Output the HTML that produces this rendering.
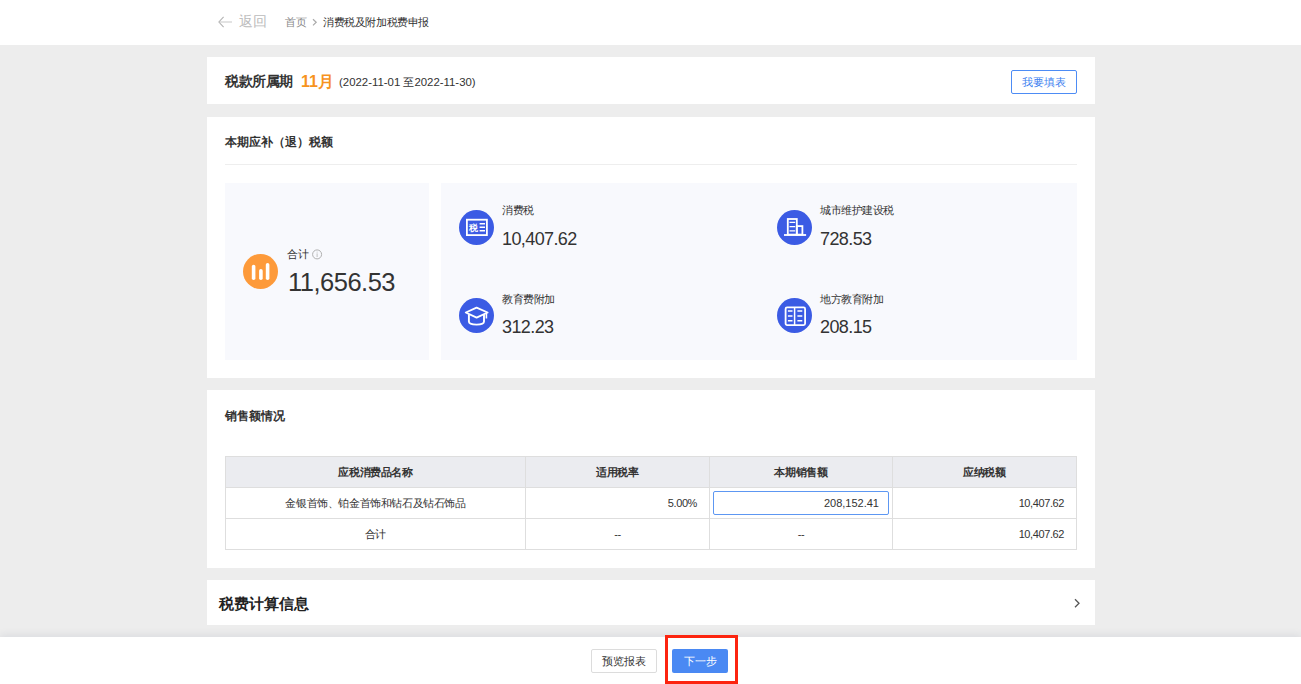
<!DOCTYPE html>
<html><head><meta charset="utf-8">
<style>
*{margin:0;padding:0;box-sizing:border-box;}
html,body{width:1301px;height:684px;overflow:hidden;}
body{background:#ededed;font-family:"Liberation Sans",sans-serif;color:#333;position:relative;}
.abs{position:absolute;white-space:nowrap;}
.card{position:absolute;left:207px;width:888px;background:#fff;}
.hdr{position:absolute;left:0;top:0;width:1301px;height:45px;background:#fff;}
.panel{position:absolute;background:#f8f9fd;}
.ic{position:absolute;width:35px;height:35px;border-radius:50%;background:#3b5be4;}
.lbl{font-size:11px;color:#333;letter-spacing:-0.5px;}
.num{font-size:18px;color:#333;letter-spacing:-0.6px;}
table{border-collapse:collapse;position:absolute;left:225px;top:456px;width:851px;table-layout:fixed;}
td,th{border:1px solid #dedede;height:31px;font-size:11px;letter-spacing:-0.4px;color:#333;}
th{background:#ebecf0;font-weight:bold;}
.bar{position:absolute;left:0;top:637px;width:1301px;height:47px;background:#fff;box-shadow:0 -2px 8px rgba(30,40,90,0.09);}
.btn{position:absolute;height:24px;font-size:11px;text-align:center;line-height:22px;border-radius:2px;}
</style></head><body>
<div class="hdr"></div>
<svg class="abs" style="left:214px;top:12px" width="22" height="20" viewBox="0 0 22 20"><path d="M5.5 10H18" stroke="#dcdcdc" stroke-width="1.6"/><path d="M9.6 4.8L4.9 10L9.6 15.2" fill="none" stroke="#b4b4b4" stroke-width="1.1"/></svg>
<div class="abs" style="left:239px;top:13px;font-size:14px;color:#bbb;">返回</div>
<div class="abs" style="left:285px;top:15px;font-size:11px;color:#888;">首页</div>
<svg class="abs" style="left:310px;top:15px" width="10" height="14" viewBox="0 0 10 14"><path d="M3 4.2L6.2 7.3L3 10.4" fill="none" stroke="#aaa" stroke-width="1.2"/></svg>
<div class="abs" style="left:323px;top:15px;font-size:11px;color:#333;letter-spacing:-0.4px;">消费税及附加税费申报</div>

<div class="card" style="top:57px;height:47px;"></div>
<div class="abs" style="left:225px;top:73px;font-size:14px;font-weight:bold;color:#333;letter-spacing:-0.5px;">税款所属期</div>
<div class="abs" style="left:301px;top:72px;font-size:16px;font-weight:bold;color:#f7931e;">11月</div>
<div class="abs" style="left:339px;top:75px;font-size:11.4px;color:#333;">(2022-11-01 至2022-11-30)</div>
<div class="abs" style="left:1011px;top:70px;width:66px;height:24px;border:1px solid #4d8cf5;border-radius:2px;font-size:11px;color:#3d7ff0;text-align:center;line-height:22px;">我要填表</div>

<div class="card" style="top:117px;height:261px;"></div>
<div class="abs" style="left:225px;top:134px;font-size:12px;font-weight:bold;color:#333;">本期应补（退）税额</div>
<div class="abs" style="left:225px;top:164px;width:852px;height:1px;background:#eeeeee;"></div>
<div class="panel" style="left:225px;top:183px;width:204px;height:177px;"></div>
<div class="panel" style="left:441px;top:183px;width:636px;height:177px;"></div>

<svg class="abs" style="left:243px;top:254px" width="35" height="35" viewBox="0 0 35 35"><circle cx="17.5" cy="17.5" r="17.5" fill="#fd9a3a"/><rect x="8.8" y="10.8" width="3.6" height="15.2" rx="1.8" fill="#fff"/><rect x="16.1" y="15" width="3.6" height="11" rx="1.8" fill="#fff"/><rect x="22.8" y="8.9" width="3.6" height="17.1" rx="1.8" fill="#fff"/></svg>
<div class="abs lbl" style="left:287px;top:247px;">合计</div>
<div class="abs num" style="left:288px;top:268px;font-size:25.5px;letter-spacing:-0.5px;">11,656.53</div>
<svg class="abs" style="left:311px;top:248px" width="13" height="13" viewBox="0 0 13 13"><circle cx="6.1" cy="6.4" r="4.5" fill="none" stroke="#b0b0b0" stroke-width="1"/><path d="M6.1 5.4V9" stroke="#c0c0c0" stroke-width="1"/><circle cx="6.1" cy="4.1" r="0.55" fill="#c0c0c0"/></svg>

<svg class="abs" style="left:459px;top:210px" width="35" height="35" viewBox="0 0 35 35"><circle cx="17.5" cy="17.5" r="17.5" fill="#3b5be4"/><rect x="7.9" y="9.7" width="20" height="15.4" fill="none" stroke="#fff" stroke-width="1.8"/><text x="9.6" y="21.2" font-size="8.5" font-weight="bold" fill="#fff" font-family="Liberation Sans, sans-serif">税</text><path d="M20.6 13.8H26M20.6 17.3H26M20.6 20.8H26" stroke="#fff" stroke-width="1.4"/></svg>
<div class="abs lbl" style="left:502px;top:203px;">消费税</div>
<div class="abs num" style="left:502px;top:229px;">10,407.62</div>

<svg class="abs" style="left:459px;top:298px" width="35" height="35" viewBox="0 0 35 35"><circle cx="17.5" cy="17.5" r="17.5" fill="#3b5be4"/><path d="M6.8 14.5L17.6 9.6L28.6 14.5L17.6 19.6Z" fill="none" stroke="#fff" stroke-width="1.9" stroke-linejoin="round"/><path d="M9.9 16.2V23.5Q9.9 26.6 17.6 26.6Q25 26.6 25 23.5V16.2" fill="none" stroke="#fff" stroke-width="1.9"/><path d="M27.4 15V20.5" stroke="#fff" stroke-width="1.6"/></svg>
<div class="abs lbl" style="left:502px;top:292px;">教育费附加</div>
<div class="abs num" style="left:502px;top:317px;">312.23</div>

<svg class="abs" style="left:777px;top:210px" width="35" height="35" viewBox="0 0 35 35"><circle cx="17.5" cy="17.5" r="17.5" fill="#3b5be4"/><rect x="10.8" y="9" width="9" height="15.6" fill="none" stroke="#fff" stroke-width="1.8"/><rect x="19.8" y="16.1" width="5.6" height="8.5" fill="none" stroke="#fff" stroke-width="1.8"/><path d="M12.5 12.4H18.2M12.5 16.6H18.2M12.5 20.9H18.2" stroke="#fff" stroke-width="1.3"/><path d="M7 25H29.1" stroke="#fff" stroke-width="1.8"/></svg>
<div class="abs lbl" style="left:820px;top:203px;">城市维护建设税</div>
<div class="abs num" style="left:820px;top:229px;">728.53</div>

<svg class="abs" style="left:777px;top:298px" width="35" height="35" viewBox="0 0 35 35"><circle cx="17.5" cy="17.5" r="17.5" fill="#3b5be4"/><rect x="8.6" y="9.4" width="19.5" height="17.7" rx="1.5" fill="none" stroke="#fff" stroke-width="1.8"/><path d="M17.6 9.4V27.1" stroke="#fff" stroke-width="1.5"/><path d="M10.9 13H15.5M10.9 18H15.5M10.9 22.7H15.5M20.4 13H25.3M20.4 18H25.3M20.4 22.7H25.3" stroke="#fff" stroke-width="1.5"/></svg>
<div class="abs lbl" style="left:820px;top:292px;">地方教育附加</div>
<div class="abs num" style="left:820px;top:317px;">208.15</div>

<div class="card" style="top:390px;height:178px;"></div>
<div class="abs" style="left:225px;top:408px;font-size:12px;font-weight:bold;color:#333;">销售额情况</div>
<table>
<colgroup><col style="width:300px"><col style="width:184px"><col style="width:183px"><col style="width:184px"></colgroup>
<tr><th>应税消费品名称</th><th>适用税率</th><th>本期销售额</th><th>应纳税额</th></tr>
<tr><td style="text-align:center">金银首饰、铂金首饰和钻石及钻石饰品</td><td style="text-align:right;padding-right:12px">5.00%</td><td></td><td style="text-align:right;padding-right:12px">10,407.62</td></tr>
<tr><td style="text-align:center">合计</td><td style="text-align:center">--</td><td style="text-align:center">--</td><td style="text-align:right;padding-right:12px">10,407.62</td></tr>
</table>
<div class="abs" style="left:713px;top:491px;width:176px;height:24px;border:1px solid #5d97f2;border-radius:2px;background:#fff;font-size:11px;text-align:right;padding-right:9px;line-height:22px;color:#333;">208,152.41</div>

<div class="card" style="top:580px;height:45px;"></div>
<div class="abs" style="left:219px;top:595px;font-size:15px;font-weight:bold;color:#222;">税费计算信息</div>
<svg class="abs" style="left:1070px;top:595px" width="14" height="16" viewBox="0 0 14 16"><path d="M5 4.2L9 8.2L5 12.2" fill="none" stroke="#555" stroke-width="1.3"/></svg>

<div class="bar"></div>
<div class="btn" style="left:591px;top:649px;width:66px;border:1px solid #dcdcdc;background:#fff;color:#333;">预览报表</div>
<div class="btn" style="left:672px;top:649px;width:56px;background:#4a89f3;color:#fff;line-height:24px;">下一步</div>
<div class="abs" style="left:665px;top:635px;width:73px;height:49px;border:3px solid #fc2410;"></div>
</body></html>
